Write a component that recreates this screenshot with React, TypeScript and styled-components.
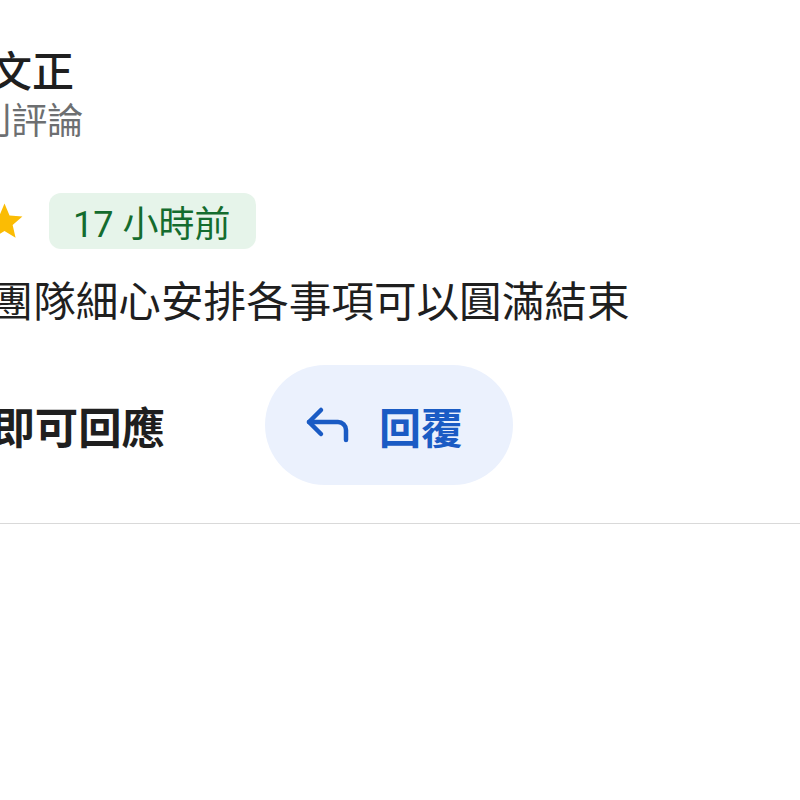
import styled, { createGlobalStyle } from 'styled-components'

const GlobalStyle = createGlobalStyle`
  html, body {
    margin: 0;
    padding: 0;
    background: #ffffff;
  }
  body {
    font-family: Roboto, "Noto Sans CJK TC", "Noto Sans", sans-serif;
    color: #1f1f1f;
  }
`

const Viewport = styled.div`
  width: 800px;
  height: 800px;
  overflow: hidden;
  background: #ffffff;
`

const Review = styled.div`
  margin-left: -52px;
  padding-top: 47px;
  display: flex;
  flex-direction: column;
`

const Name = styled.div`
  font-size: 42px;
  line-height: 52px;
  font-weight: 500;
  color: #1f1f1f;
  white-space: nowrap;
`

const Meta = styled.div`
  margin-top: 1px;
  margin-left: -2px;
  font-size: 36px;
  line-height: 44px;
  color: #6d6f71;
  white-space: nowrap;
`

const RatingRow = styled.div`
  margin-top: 49px;
  display: flex;
  align-items: center;
  gap: 23px;
`

const StarBox = styled.div`
  width: 78px;
  height: 56px;
  display: flex;
  align-items: center;
  justify-content: flex-end;
`

const Star = styled.svg`
  flex: none;
  width: 43px;
  height: 43px;
  fill: #fbbc04;
`

const TimeChip = styled.div`
  height: 56px;
  padding: 0 26px 0 24px;
  display: flex;
  align-items: center;
  border-radius: 12px;
  background: #e6f4ea;
  color: #146c2e;
  font-size: 36px;
  white-space: nowrap;
`

const Body = styled.div`
  margin-top: 28px;
  font-size: 42.6px;
  line-height: 50px;
  color: #1f1f1f;
  white-space: nowrap;
`

const ActionRow = styled.div`
  margin-top: 38px;
  display: flex;
  align-items: center;
  gap: 100px;
`

const Prompt = styled.div`
  font-size: 43.4px;
  font-weight: 700;
  color: #1f1f1f;
  white-space: nowrap;
`

const ReplyButton = styled.button`
  height: 120px;
  padding: 0 50px 0 40px;
  display: flex;
  align-items: center;
  gap: 28px;
  border: none;
  border-radius: 60px;
  background: #ebf1fd;
  color: #1a5bc4;
  font-family: inherit;
  font-size: 42px;
  font-weight: 700;
  cursor: pointer;
`

const ReplyIcon = styled.svg`
  width: 46px;
  height: 40px;
  fill: none;
  stroke: #1a5bc4;
  stroke-width: 4.5;
  stroke-linecap: round;
  stroke-linejoin: round;
`

const Divider = styled.div`
  margin-top: 38px;
  height: 1px;
  background: #d9d9d9;
`

const StarIcon = () => (
  <Star viewBox="0 0 24 24">
    <polygon points="12,17.27 18.18,21 16.54,13.97 22,9.24 14.81,8.62 12,2 9.19,8.62 2,9.24 7.46,13.97 5.82,21" />
  </Star>
)

const App = () => {
  return (
    <>
      <GlobalStyle />
      <Viewport>
        <Review>
          <Name>陳文正</Name>
          <Meta>3 則評論</Meta>
          <RatingRow>
            <StarBox>
              {[0, 1, 2, 3, 4].map((i) => (
                <StarIcon key={i} />
              ))}
            </StarBox>
            <TimeChip>17 小時前</TimeChip>
          </RatingRow>
          <Body>謝團隊細心安排各事項可以圓滿結束</Body>
          <ActionRow>
            <Prompt>立即可回應</Prompt>
            <ReplyButton>
              <ReplyIcon viewBox="0 0 46 40">
                <polyline points="16,5 4,17 16,29" />
                <path d="M4 17 H33 a8 8 0 0 1 8 8 V35" />
              </ReplyIcon>
              回覆
            </ReplyButton>
          </ActionRow>
        </Review>
        <Divider />
      </Viewport>
    </>
  )
}

export default App
